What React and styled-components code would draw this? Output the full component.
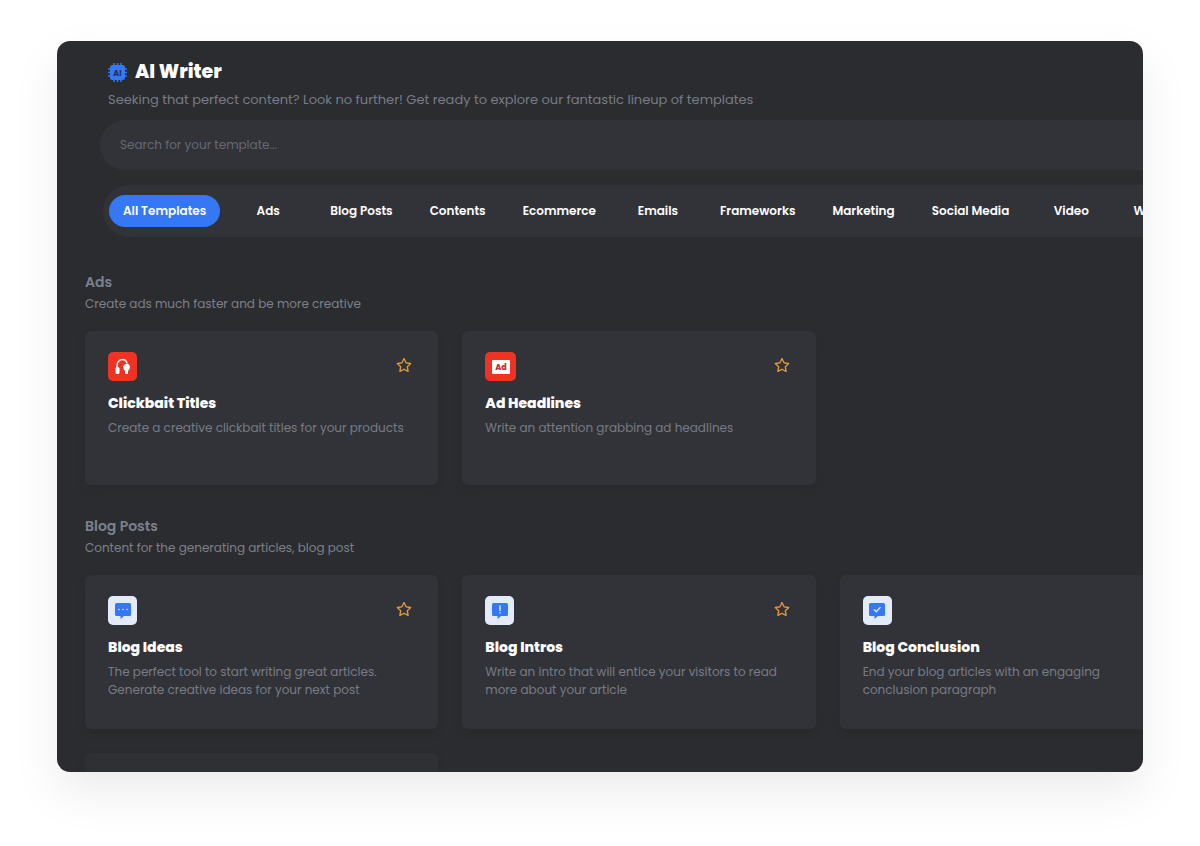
import React from 'react';

// External packages
import styled, { createGlobalStyle } from 'styled-components';
import { FaRegStar } from 'react-icons/fa6';

const GlobalStyle = createGlobalStyle`
  * {
    box-sizing: border-box;
  }

  body {
    margin: 0;
    background: #fff;
    font-family: Poppins, Inter, 'Open Sans', sans-serif;
  }

  h1, h2, h3, p {
    margin: 0;
  }

  button, input {
    font-family: inherit;
  }
`;

const Page = styled.div`
  height: 100vh;
  padding: 41px 57px 74px;
  overflow: hidden;
`;

const Panel = styled.main`
  height: 100%;
  overflow: hidden;
  border-radius: 13px;
  background: #2b2c2f;
  box-shadow: 0 20px 48px rgba(0, 0, 0, 0.08);
`;

// wider than the panel, the rest is cut off on the right
const Content = styled.div`
  width: calc(100% + 78px);
  padding: 17px 28px;
`;

const Header = styled.header`
  padding-left: 23px;
`;

const Title = styled.h1`
  display: flex;
  align-items: center;
  gap: 8px;
  color: #fff;
  font-size: 19px;
  font-weight: 800;
  line-height: 28px;
`;

const Subtitle = styled.p`
  padding-top: 3px;
  color: #777c88;
  font-size: 13px;
  line-height: 22px;
`;

const SearchInput = styled.input`
  display: block;
  width: 100%;
  height: 50px;
  margin: 9px 0 0 15px;
  padding: 0 20px;
  border: 0;
  border-radius: 25px;
  outline: none;
  background: #323338;
  color: #fff;
  font-size: 12px;

  &::placeholder {
    color: #656972;
    opacity: 1;
  }
`;

const Tabs = styled.nav`
  display: flex;
  gap: 9px;
  margin: 15px 0 4px 18px;
  padding: 10px 6px;
  border-radius: 26px;
  background: #323338;
`;

const Tab = styled.button`
  flex: none;
  min-width: 78px;
  height: 32px;
  padding: 0 14px;
  border: 0;
  border-radius: 16px;
  background: ${(props) => (props.$active ? '#3478f6' : 'transparent')};
  color: #fff;
  font-size: 12px;
  font-weight: 600;
  cursor: pointer;
`;

const Section = styled.section`
  padding-top: 30px;
`;

const SectionTitle = styled.h2`
  color: #7c8190;
  font-size: 14px;
  font-weight: 600;
  line-height: 22px;
`;

const SectionText = styled.p`
  color: #7c808a;
  font-size: 12px;
  line-height: 22px;
`;

const CardGrid = styled.div`
  display: grid;
  grid-template-columns: repeat(3, 1fr);
  gap: 24px;
  padding-top: 16px;
`;

const Card = styled.article`
  height: 154px;
  padding: 21px 23px;
  border-radius: 6px;
  background: ${(props) => (props.$faded ? '#2f3033' : '#323338')};
  box-shadow: 0 4px 12px rgba(0, 0, 0, 0.06);
`;

const CardTop = styled.div`
  display: flex;
  justify-content: space-between;
  align-items: flex-start;
`;

const IconBox = styled.span`
  display: grid;
  place-items: center;
  width: ${(props) => (props.$wide ? 31 : 29)}px;
  height: 29px;
  border-radius: 5px;
  background: ${(props) => (props.$red ? '#ee3224' : '#e3ebfb')};
`;

const StarButton = styled.button`
  display: flex;
  padding: 5px 3px;
  border: 0;
  background: none;
  color: #e39a3b;
  font-size: 16px;
  cursor: pointer;
`;

const CardTitle = styled.h3`
  padding-top: 11px;
  color: #fff;
  font-size: 14px;
  font-weight: 800;
  line-height: 22px;
`;

const CardText = styled.p`
  padding: 5px 8px 0 0;
  color: #777b85;
  font-size: 12px;
  line-height: 18px;
`;

const ChipIcon = () => (
  <svg width="19" height="19" viewBox="0 0 38 38" aria-hidden="true">
    <path
      d="M12 1v36M19 1v36M26 1v36M1 12h36M1 19h36M1 26h36"
      stroke="#3478f6"
      strokeWidth="3"
      strokeLinecap="round"
    />
    <rect x="4" y="4" width="30" height="30" rx="5" fill="#3478f6" />
    <text x="19" y="25" textAnchor="middle" fontSize="16" fontWeight="700" fill="#23304f">AI</text>
  </svg>
);

const HeadsetIcon = () => (
  <svg width="15" height="17" viewBox="0 0 30 34" aria-hidden="true">
    <path d="M4 22v-7C4 8 9 3 15 3s8 3 9 8" fill="none" stroke="#fff" strokeWidth="3" />
    <rect x="1" y="18" width="8" height="14" rx="3" fill="#fff" />
    <path d="M20 12h7l3 5-1 5-3 4v6h-6v-6l-3-4-1-5z" fill="#fff" />
  </svg>
);

const AdIcon = () => (
  <svg width="18" height="14" viewBox="0 0 18 14" aria-hidden="true">
    <rect width="18" height="14" rx="1" fill="#fff" />
    <text x="9" y="10" textAnchor="middle" fontSize="8" fontWeight="800" fill="#c9302c">Ad</text>
  </svg>
);

const BubbleIcon = ({ children }) => (
  <svg width="16" height="16" viewBox="0 0 16 16" aria-hidden="true">
    <path d="M1.5 0h13A1.5 1.5 0 0 1 16 1.5v10a1.5 1.5 0 0 1-1.5 1.5H9l-3.500 3V13h-4A1.5 1.5 0 0 1 0 11.500v-10A1.5 1.5 0 0 1 1.500 0z" fill="#3478f6" />
    {children}
  </svg>
);

const DotsIcon = () => (
  <BubbleIcon>
    <path d="M4 6.500h.01M8 6.500h.01M12 6.500h.01" stroke="#dfe9ff" strokeWidth="1.6" strokeLinecap="round" />
  </BubbleIcon>
);

const AlertIcon = () => (
  <BubbleIcon>
    <path d="M8 3v4.500M8 9.800v.2" stroke="#dfe9ff" strokeWidth="1.5" strokeLinecap="round" />
  </BubbleIcon>
);

const CheckIcon = () => (
  <BubbleIcon>
    <path d="M5.300 6.800l2 2 3.700-4.200" fill="none" stroke="#dfe9ff" strokeWidth="1.4" strokeLinecap="round" />
  </BubbleIcon>
);

const tabs = [
  'All Templates',
  'Ads',
  'Blog Posts',
  'Contents',
  'Ecommerce',
  'Emails',
  'Frameworks',
  'Marketing',
  'Social Media',
  'Video',
  'Website',
];

const adTemplates = [
  { name: 'Clickbait Titles', text: 'Create a creative clickbait titles for your products', icon: <HeadsetIcon />, red: true },
  { name: 'Ad Headlines', text: 'Write an attention grabbing ad headlines', icon: <AdIcon />, red: true, wide: true },
];

const blogTemplates = [
  { name: 'Blog Ideas', text: 'The perfect tool to start writing great articles. Generate creative ideas for your next post', icon: <DotsIcon /> },
  { name: 'Blog Intros', text: 'Write an intro that will entice your visitors to read more about your article', icon: <AlertIcon /> },
  { name: 'Blog Conclusion', text: 'End your blog articles with an engaging conclusion paragraph', icon: <CheckIcon /> },
];

const TemplateCard = (props) => (
  <Card>
    <CardTop>
      <IconBox $red={props.red} $wide={props.wide}>{props.icon}</IconBox>
      <StarButton type="button" aria-label={`Favourite ${props.name}`}>
        <FaRegStar />
      </StarButton>
    </CardTop>
    <CardTitle>{props.name}</CardTitle>
    <CardText>{props.text}</CardText>
  </Card>
);

const TemplateSection = (props) => (
  <Section>
    <SectionTitle>{props.title}</SectionTitle>
    <SectionText>{props.text}</SectionText>
    <CardGrid>
      { props.templates.map((template) => (
        <TemplateCard key={template.name} {...template} />
      )) }
      {props.children}
    </CardGrid>
  </Section>
);

const App = () => {
  return (
    <Page>
      <GlobalStyle />
      <Panel>
        <Content>
          <Header>
            <Title><ChipIcon /> AI Writer</Title>
            <Subtitle>Seeking that perfect content? Look no further! Get ready to explore our fantastic lineup of templates</Subtitle>
          </Header>
          <SearchInput type="search" aria-label="Search templates" placeholder="Search for your template..." />
          <Tabs>
            { tabs.map((tab, index) => (
              <Tab key={tab} type="button" $active={index === 0}>{tab}</Tab>
            )) }
          </Tabs>
          <TemplateSection title="Ads" text="Create ads much faster and be more creative" templates={adTemplates} />
          <TemplateSection title="Blog Posts" text="Content for the generating articles, blog post" templates={blogTemplates}>
            <Card $faded />
          </TemplateSection>
        </Content>
      </Panel>
    </Page>
  );
};

export default App;
